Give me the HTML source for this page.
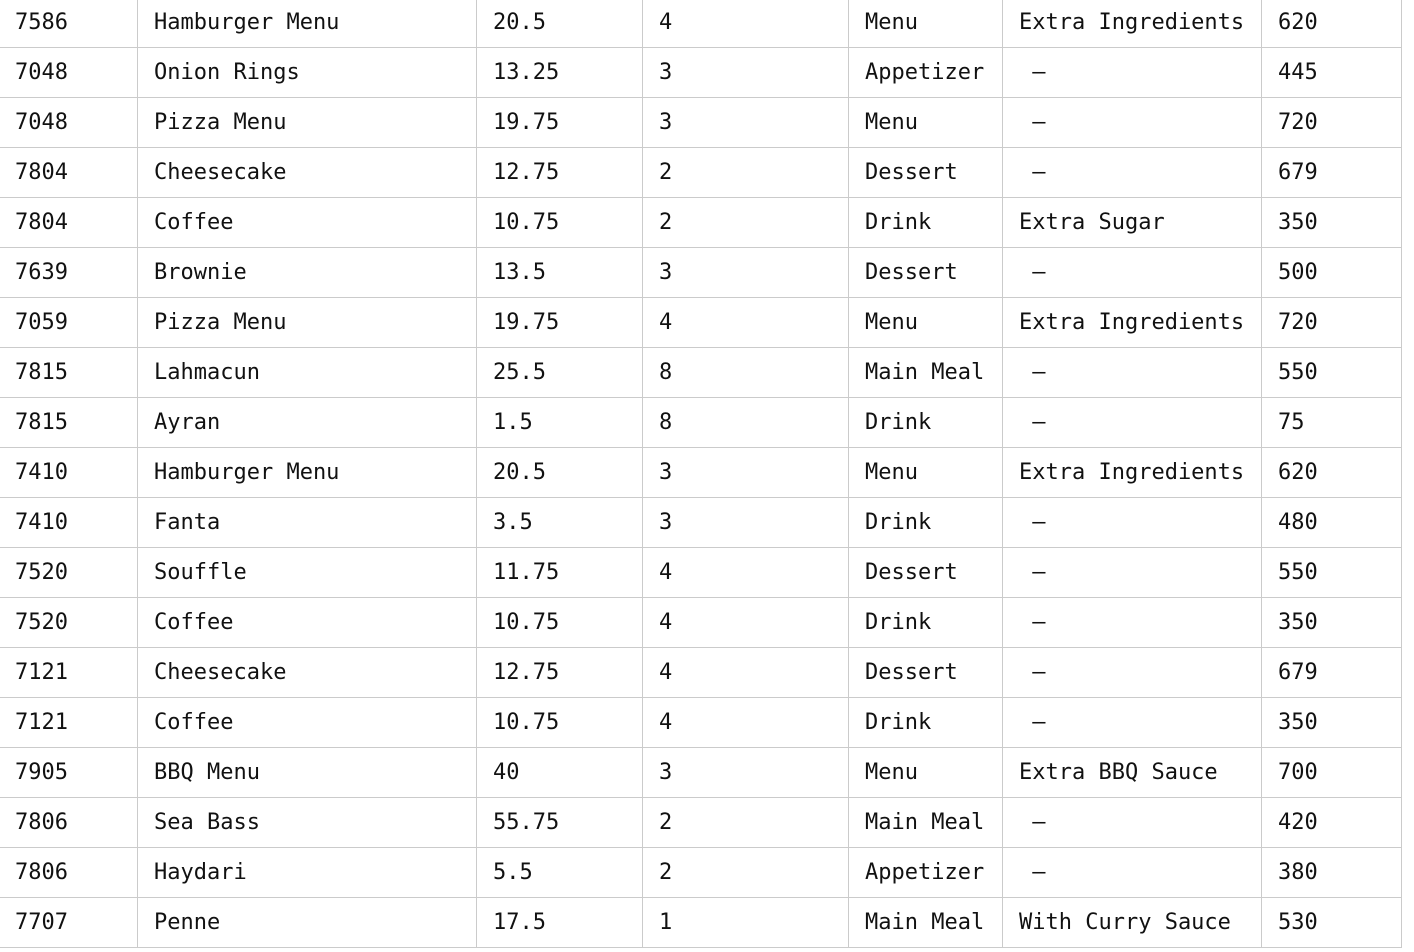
<!DOCTYPE html>
<html><head><meta charset="utf-8"><style>
html,body{margin:0;padding:0;background:#fff;width:1414px;height:952px;overflow:hidden}
table{position:absolute;left:-2px;top:-3px;border-collapse:collapse;table-layout:fixed;font-family:"DejaVu Sans Mono","Liberation Mono",monospace;font-size:22px;color:#111}
td{border:1px solid #cbcbcb;height:49px;padding:0 0 0 16px;white-space:nowrap;overflow:hidden;line-height:49px}
</style></head><body>
<table>
<colgroup><col style="width:139px"><col style="width:339px"><col style="width:166px"><col style="width:206px"><col style="width:154px"><col style="width:259px"><col style="width:140px"></colgroup>
<tr><td>7586</td><td>Hamburger Menu</td><td>20.5</td><td>4</td><td>Menu</td><td>Extra Ingredients</td><td>620</td></tr>
<tr><td>7048</td><td>Onion Rings</td><td>13.25</td><td>3</td><td>Appetizer</td><td>&nbsp;–</td><td>445</td></tr>
<tr><td>7048</td><td>Pizza Menu</td><td>19.75</td><td>3</td><td>Menu</td><td>&nbsp;–</td><td>720</td></tr>
<tr><td>7804</td><td>Cheesecake</td><td>12.75</td><td>2</td><td>Dessert</td><td>&nbsp;–</td><td>679</td></tr>
<tr><td>7804</td><td>Coffee</td><td>10.75</td><td>2</td><td>Drink</td><td>Extra Sugar</td><td>350</td></tr>
<tr><td>7639</td><td>Brownie</td><td>13.5</td><td>3</td><td>Dessert</td><td>&nbsp;–</td><td>500</td></tr>
<tr><td>7059</td><td>Pizza Menu</td><td>19.75</td><td>4</td><td>Menu</td><td>Extra Ingredients</td><td>720</td></tr>
<tr><td>7815</td><td>Lahmacun</td><td>25.5</td><td>8</td><td>Main Meal</td><td>&nbsp;–</td><td>550</td></tr>
<tr><td>7815</td><td>Ayran</td><td>1.5</td><td>8</td><td>Drink</td><td>&nbsp;–</td><td>75</td></tr>
<tr><td>7410</td><td>Hamburger Menu</td><td>20.5</td><td>3</td><td>Menu</td><td>Extra Ingredients</td><td>620</td></tr>
<tr><td>7410</td><td>Fanta</td><td>3.5</td><td>3</td><td>Drink</td><td>&nbsp;–</td><td>480</td></tr>
<tr><td>7520</td><td>Souffle</td><td>11.75</td><td>4</td><td>Dessert</td><td>&nbsp;–</td><td>550</td></tr>
<tr><td>7520</td><td>Coffee</td><td>10.75</td><td>4</td><td>Drink</td><td>&nbsp;–</td><td>350</td></tr>
<tr><td>7121</td><td>Cheesecake</td><td>12.75</td><td>4</td><td>Dessert</td><td>&nbsp;–</td><td>679</td></tr>
<tr><td>7121</td><td>Coffee</td><td>10.75</td><td>4</td><td>Drink</td><td>&nbsp;–</td><td>350</td></tr>
<tr><td>7905</td><td>BBQ Menu</td><td>40</td><td>3</td><td>Menu</td><td>Extra BBQ Sauce</td><td>700</td></tr>
<tr><td>7806</td><td>Sea Bass</td><td>55.75</td><td>2</td><td>Main Meal</td><td>&nbsp;–</td><td>420</td></tr>
<tr><td>7806</td><td>Haydari</td><td>5.5</td><td>2</td><td>Appetizer</td><td>&nbsp;–</td><td>380</td></tr>
<tr><td>7707</td><td>Penne</td><td>17.5</td><td>1</td><td>Main Meal</td><td>With Curry Sauce</td><td>530</td></tr>
</table>
</body></html>
